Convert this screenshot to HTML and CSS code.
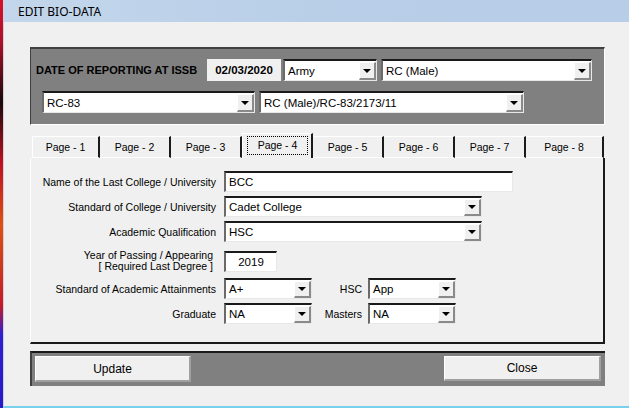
FILE: index.html
```html
<!DOCTYPE html>
<html>
<head>
<meta charset="utf-8">
<link rel="stylesheet" href="styles.css">
</head>
<body>
<div class="screen">
  <div class="desk-strip"></div>
  <div class="window">
    <div class="titlebar">EDIT BIO-DATA</div>
    <div class="client">
      <div class="top-panel">
        <div class="top-row row-one">
          <span class="issb-label">DATE OF REPORTING AT ISSB</span>
          <span class="date-box">02/03/2020</span>
          <div class="select w-army"><span class="val">Army</span><span class="btn"><i></i></span></div>
          <div class="select w-rc"><span class="val">RC (Male)</span><span class="btn"><i></i></span></div>
        </div>
        <div class="top-row row-two">
          <div class="select w-rc83"><span class="val">RC-83</span><span class="btn"><i></i></span></div>
          <div class="select w-code"><span class="val">RC (Male)/RC-83/2173/11</span><span class="btn"><i></i></span></div>
        </div>
      </div>

      <div class="tabs">
        <div class="tab t1">Page - 1</div>
        <div class="tab">Page - 2</div>
        <div class="tab">Page - 3</div>
        <div class="tab active"><span class="focus">Page - 4</span></div>
        <div class="tab">Page - 5</div>
        <div class="tab">Page - 6</div>
        <div class="tab">Page - 7</div>
        <div class="tab t8">Page - 8</div>
      </div>

      <div class="tab-body">
        <div class="form">
          <div class="lbl">Name of the Last College / University</div>
          <div class="field"><div class="textbox w-name">BCC</div></div>

          <div class="lbl">Standard of College / University</div>
          <div class="field"><div class="select w-wide"><span class="val">Cadet College</span><span class="btn"><i></i></span></div></div>

          <div class="lbl">Academic Qualification</div>
          <div class="field"><div class="select w-wide"><span class="val">HSC</span><span class="btn"><i></i></span></div></div>

          <div class="lbl two-line">Year of Passing / Appearing<br>[ Required Last Degree ]</div>
          <div class="field year-field"><div class="textbox w-year">2019</div></div>

          <div class="lbl first-pair">Standard of Academic Attainments</div>
          <div class="field pair first-pair">
            <div class="select w-small"><span class="val">A+</span><span class="btn"><i></i></span></div>
            <span class="sub-lbl">HSC</span>
            <div class="select w-small"><span class="val">App</span><span class="btn"><i></i></span></div>
          </div>

          <div class="lbl">Graduate</div>
          <div class="field pair">
            <div class="select w-small"><span class="val">NA</span><span class="btn"><i></i></span></div>
            <span class="sub-lbl">Masters</span>
            <div class="select w-small"><span class="val">NA</span><span class="btn"><i></i></span></div>
          </div>
        </div>
      </div>

      <div class="bottom-panel">
        <button class="push update">Update</button>
        <button class="push close">Close</button>
      </div>
    </div>
  </div>
</div>
</body>
</html>
```

FILE: styles.css
```css
* { box-sizing: border-box; }
html, body { margin: 0; padding: 0; }
body {
  width: 629px;
  height: 408px;
  overflow: hidden;
  font-family: "Liberation Sans", Arial, sans-serif;
  font-size: 11px;
  color: #000;
  background: #f0f0f0;
}
.screen {
  display: flex;
  height: 408px;
}
.desk-strip {
  width: 3px;
  flex: none;
  background: linear-gradient(to bottom, #d8102a 0%, #b0102a 10%, #1a0a0a 25%, #c01020 40%, #e05010 55%, #d03818 65%, #c81828 75%, #3020d0 82%, #2818c8 100%);
}
.window {
  flex: 1;
  display: flex;
  flex-direction: column;
  border-left: 1px solid #c8d4e0;
  border-bottom: 2px solid #78d0ec;
  background: #f0f0f0;
}
.titlebar {
  height: 22px;
  flex: none;
  padding-left: 14px;
  line-height: 24px;
  font-family: "Noto Sans", "Open Sans", sans-serif;
  font-size: 12px;
  color: #000;
  background: linear-gradient(to right, #c3d6eb 0%, #b9cfe8 50%, #b8cee8 100%);
}
.client {
  flex: 1;
  padding: 25px 0 0 26px;
  background: #f0f0f0;
}

/* top grey panel */
.top-panel {
  width: 575px;
  height: 78px;
  background: #808080;
  border-top: 2px solid #404040;
  border-left: 1px solid #404040;
  border-bottom: 1px solid #ffffff;
  border-right: 1px solid #ffffff;
  padding-top: 10px;
}
.top-row {
  display: flex;
  align-items: center;
  height: 22px;
}
.row-one { padding-left: 5px; }
.row-two { padding-left: 11px; margin-top: 10px; }
.issb-label {
  font-weight: bold;
  font-size: 11px;
  width: 171px;
  flex: none;
}
.date-box {
  width: 74px;
  height: 22px;
  background: #f0f0f0;
  font-weight: bold;
  font-size: 11.5px;
  line-height: 22px;
  text-align: center;
  margin-right: 2px;
  flex: none;
}

/* select boxes */
.select {
  display: flex;
  align-items: center;
  height: 22px;
  background: #fff;
  border-top: 2px solid #1a1a1a;
  border-left: 2px solid #6a6a6a;
  border-bottom: 1px solid #e8e8e8;
  border-right: 1px solid #e8e8e8;
  flex: none;
}
.select .val {
  flex: 1;
  padding-left: 3px;
  font-size: 11.5px;
  white-space: nowrap;
  overflow: hidden;
}
.select .btn {
  width: 17px;
  height: 18px;
  background: #f0f0f0;
  border-top: 1px solid #ffffff;
  border-left: 1px solid #ffffff;
  border-bottom: 2px solid #8a8a8a;
  border-right: 2px solid #8a8a8a;
  display: flex;
  align-items: center;
  justify-content: center;
  flex: none;
}
.select .btn i {
  width: 0;
  height: 0;
  border-left: 4px solid transparent;
  border-right: 4px solid transparent;
  border-top: 4px solid #000;
  margin-top: 1px;
}
.w-army { width: 94px; margin-right: 4px; }
.w-rc { width: 211px; }
.w-rc83 { width: 213px; margin-right: 4px; }
.w-code { width: 265px; }

/* tabs */
.tabs {
  display: flex;
  margin-top: 10px;
  margin-left: 2px;
  height: 23px;
  align-items: flex-end;
}
.tab {
  width: 71px;
  height: 22px;
  line-height: 21px;
  text-align: center;
  font-size: 10.5px;
  background: #f0f0f0;
  border-top: 1px solid #ffffff;
  border-right: 2px solid #1a1a1a;
  border-bottom: 1px solid #ffffff;
  flex: none;
}
.tab.t1 { width: 68px; border-left: 1px solid #ffffff; }
.tab.t8 { width: 78px; }
.tab.active {
  height: 25px;
  border-bottom: none;
  border-left: 1px solid #ffffff;
  line-height: 18px;
  padding: 2px 3px 0 4px;
}
.tab.active .focus {
  display: block;
  border: 1px dotted #000;
  height: 19px;
  line-height: 16px;
}

/* tab body */
.tab-body {
  width: 575px;
  height: 186px;
  background: #f0f0f0;
  border-left: 1px solid #ffffff;
  border-right: 2px solid #1a1a1a;
  border-bottom: 2px solid #1a1a1a;
  padding-top: 13px;
}
.form {
  display: grid;
  grid-template-columns: 185px auto;
  column-gap: 8px;
  row-gap: 4px;
  align-items: center;
}
.lbl {
  text-align: right;
  font-size: 10.5px;
}
.lbl.two-line {
  line-height: 11px;
  padding-top: 4px;
  padding-right: 3px;
}
.lbl.first-pair { margin-top: 2px; }
.field { display: flex; align-items: center; }
.textbox {
  height: 21px;
  background: #fff;
  border-top: 2px solid #1a1a1a;
  border-left: 2px solid #6a6a6a;
  border-bottom: 1px solid #e8e8e8;
  border-right: 1px solid #e8e8e8;
  padding-left: 3px;
  line-height: 18px;
  font-size: 11.5px;
}
.w-name { width: 289px; }
.w-year { width: 53px; text-align: center; padding-left: 0; }
.year-field { padding-top: 4px; }
.w-wide { width: 258px; height: 21px; }
.w-wide .btn { height: 17px; }
.w-small { width: 88px; height: 21px; }
.w-small .btn { height: 17px; }
.field.pair .sub-lbl {
  width: 56px;
  text-align: right;
  padding-right: 6px;
  font-size: 10.5px;
}
.field.first-pair { margin-top: 2px; }

/* bottom panel */
.bottom-panel {
  width: 575px;
  height: 35px;
  margin-top: 7px;
  background: #808080;
  border-top: 2px solid #1a1a1a;
  border-left: 2px solid #404040;
  display: flex;
  justify-content: space-between;
  align-items: flex-start;
  padding: 3px 4px 0 3px;
}
.push {
  font-family: "Liberation Sans", Arial, sans-serif;
  font-size: 12px;
  color: #000;
  background: #f0f0f0;
  border-top: 1px solid #ffffff;
  border-left: 1px solid #ffffff;
  border-bottom: 2px solid #a0a0a0;
  border-right: 2px solid #a0a0a0;
  padding: 0;
}
.update { width: 156px; height: 26px; }
.close { width: 157px; height: 25px; }
```
